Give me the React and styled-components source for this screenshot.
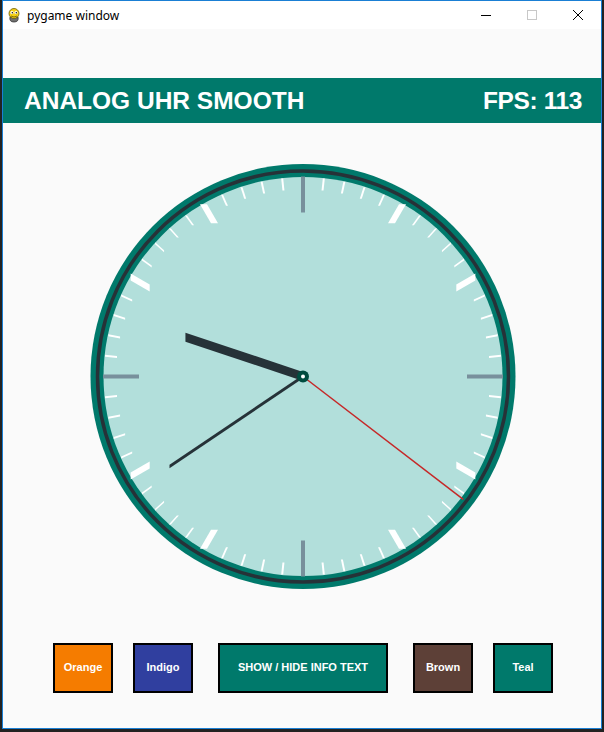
import { createGlobalStyle, styled } from "styled-components";

const GlobalStyle = createGlobalStyle`
	html, body {
		margin: 0;
		padding: 0;
		background: #222222;
		width: 604px;
		height: 732px;
		overflow: hidden;
	}
	#root {
		padding-left: 2px;
	}
`;

const Window = styled.div`
	width: 598px;
	height: 727px;
	border: 1px solid #1a7fd4;
	display: flex;
	flex-direction: column;
	background: #fafafa;
`;

const TitleBar = styled.div`
	height: 28px;
	background: #ffffff;
	display: flex;
	align-items: center;
	font-family: "Noto Sans", "Liberation Sans", sans-serif;
	font-size: 12px;
	color: #000;
`;

const AppIcon = styled.svg`
	margin: 0 5px 0 3px;
	flex-shrink: 0;
`;

const Title = styled.span`
	flex: 1;
	padding-top: 1px;
`;

const CaptionButton = styled.div`
	width: 46px;
	height: 28px;
	display: flex;
	align-items: center;
	justify-content: center;
	color: ${(p) => (p.$disabled ? "#c8c8c8" : "#000")};
`;

const Content = styled.div`
	flex: 1;
	display: flex;
	flex-direction: column;
	padding-top: 49px;
`;

const Header = styled.div`
	height: 45px;
	background: #00796b;
	color: #ffffff;
	display: flex;
	align-items: center;
	justify-content: space-between;
	padding: 0 19px 0 21px;
	font-family: "Liberation Sans", Arial, sans-serif;
	font-weight: 700;
	font-size: 24.5px;
`;

const Fps = styled.span`
	letter-spacing: -0.4px;
`;

const ClockArea = styled.div`
	display: flex;
	justify-content: center;
	padding-left: 2px;
	margin-top: 39px;
`;

const ButtonRow = styled.div`
	display: flex;
	justify-content: center;
	gap: 20px;
	padding-left: 2px;
	margin-top: 51px;
`;

const ColorButton = styled.button`
	width: ${(p) => (p.$wide ? "170px" : "60px")};
	margin: ${(p) => (p.$wide ? "0 5px" : "0")};
	height: 50px;
	box-sizing: border-box;
	border: 2px solid #000;
	border-radius: 0;
	background: ${(p) => p.$color};
	color: #ffffff;
	font-family: "Liberation Sans", Arial, sans-serif;
	font-weight: 700;
	font-size: 11px;
	padding: 0 0 2px;
`;

const C = 215;
const CY = 214.5;

const polar = (deg, r) => {
	const a = (deg * Math.PI) / 180;
	return [C + Math.sin(a) * r, CY - Math.cos(a) * r];
};

// pygame-style thick line: widened along x or y, so the ends are cut straight
const PgLine = ({ from, to, color, width }) => {
	const [x1, y1] = from;
	const [x2, y2] = to;
	const h = width / 2;
	const steep = Math.abs(y2 - y1) > Math.abs(x2 - x1);
	const pts = steep
		? [[x1 - h, y1], [x1 + h, y1], [x2 + h, y2], [x2 - h, y2]]
		: [[x1, y1 - h], [x1, y1 + h], [x2, y2 + h], [x2, y2 - h]];
	return <polygon points={pts.map((p) => p.join(",")).join(" ")} fill={color} />;
};

const Clock = () => {
	const ticks = [];
	for (let i = 0; i < 60; i++) {
		const deg = i * 6;
		if (i % 15 === 0) {
			ticks.push(<PgLine key={i} from={polar(deg, 200)} to={polar(deg, 164)} color="#78909c" width={4} />);
		} else if (i % 5 === 0) {
			ticks.push(<PgLine key={i} from={polar(deg, 199)} to={polar(deg, 177)} color="#ffffff" width={7} />);
		} else {
			ticks.push(<PgLine key={i} from={polar(deg, 199)} to={polar(deg, 187)} color="#ffffff" width={2} />);
		}
	}
	const center = [C, CY];
	return (
		<svg width="430" height="430" viewBox="0 0 430 430">
			<circle cx={C} cy={CY} r={212.5} fill="#00796b" />
			<circle cx={C} cy={CY} r={205.5} fill="none" stroke="#263238" strokeWidth={3.5} />
			<circle cx={C} cy={CY} r={199.5} fill="#b2dfdb" />
			{ticks}
			<PgLine from={center} to={polar(288.5, 124)} color="#263238" width={9} />
			<PgLine from={center} to={polar(236, 161)} color="#263238" width={3.5} />
			<line x1={C} y1={CY} x2={polar(127.5, 202)[0]} y2={polar(127.5, 202)[1]} stroke="#c62828" strokeWidth={1.5} />
			<circle cx={C} cy={CY} r={6} fill="#004d40" />
			<circle cx={C} cy={CY} r={2} fill="#ffffff" />
		</svg>
	);
};

const PygameIcon = () => (
	<AppIcon width="16" height="16" viewBox="0 0 16 16">
		<path d="M4 10 Q3 15 8 15 Q13 15 12 10 Z" fill="#707070" stroke="#333" strokeWidth="0.8" />
		<ellipse cx="8" cy="6.5" rx="5" ry="5" fill="#f5d016" stroke="#6b5a00" strokeWidth="0.8" />
		<circle cx="6" cy="5.5" r="1.6" fill="#fff" />
		<circle cx="10" cy="5.5" r="1.6" fill="#fff" />
		<circle cx="6.3" cy="5.8" r="0.7" fill="#000" />
		<circle cx="10.3" cy="5.8" r="0.7" fill="#000" />
		<path d="M5 9 Q8 11 11 9" fill="none" stroke="#6b5a00" strokeWidth="0.8" />
	</AppIcon>
);

export default function App() {
	return (
		<>
			<GlobalStyle />
			<Window>
				<TitleBar>
					<PygameIcon />
					<Title>pygame window</Title>
					<CaptionButton>
						<svg width="10" height="10" viewBox="0 0 10 10">
							<line x1="0" y1="5.5" x2="10" y2="5.5" stroke="currentColor" strokeWidth="1" />
						</svg>
					</CaptionButton>
					<CaptionButton $disabled>
						<svg width="10" height="10" viewBox="0 0 10 10">
							<rect x="0.5" y="0.5" width="9" height="9" fill="none" stroke="currentColor" strokeWidth="1" />
						</svg>
					</CaptionButton>
					<CaptionButton>
						<svg width="10" height="10" viewBox="0 0 10 10">
							<path d="M0 0 L10 10 M10 0 L0 10" stroke="currentColor" strokeWidth="1" />
						</svg>
					</CaptionButton>
				</TitleBar>
				<Content>
					<Header>
						<span>ANALOG UHR SMOOTH</span>
						<Fps>FPS: 113</Fps>
					</Header>
					<ClockArea>
						<Clock />
					</ClockArea>
					<ButtonRow>
						<ColorButton $color="#f57c00">Orange</ColorButton>
						<ColorButton $color="#303f9f">Indigo</ColorButton>
						<ColorButton $color="#00796b" $wide>
							SHOW / HIDE INFO TEXT
						</ColorButton>
						<ColorButton $color="#5d4037">Brown</ColorButton>
						<ColorButton $color="#00796b">Teal</ColorButton>
					</ButtonRow>
				</Content>
			</Window>
		</>
	);
}
